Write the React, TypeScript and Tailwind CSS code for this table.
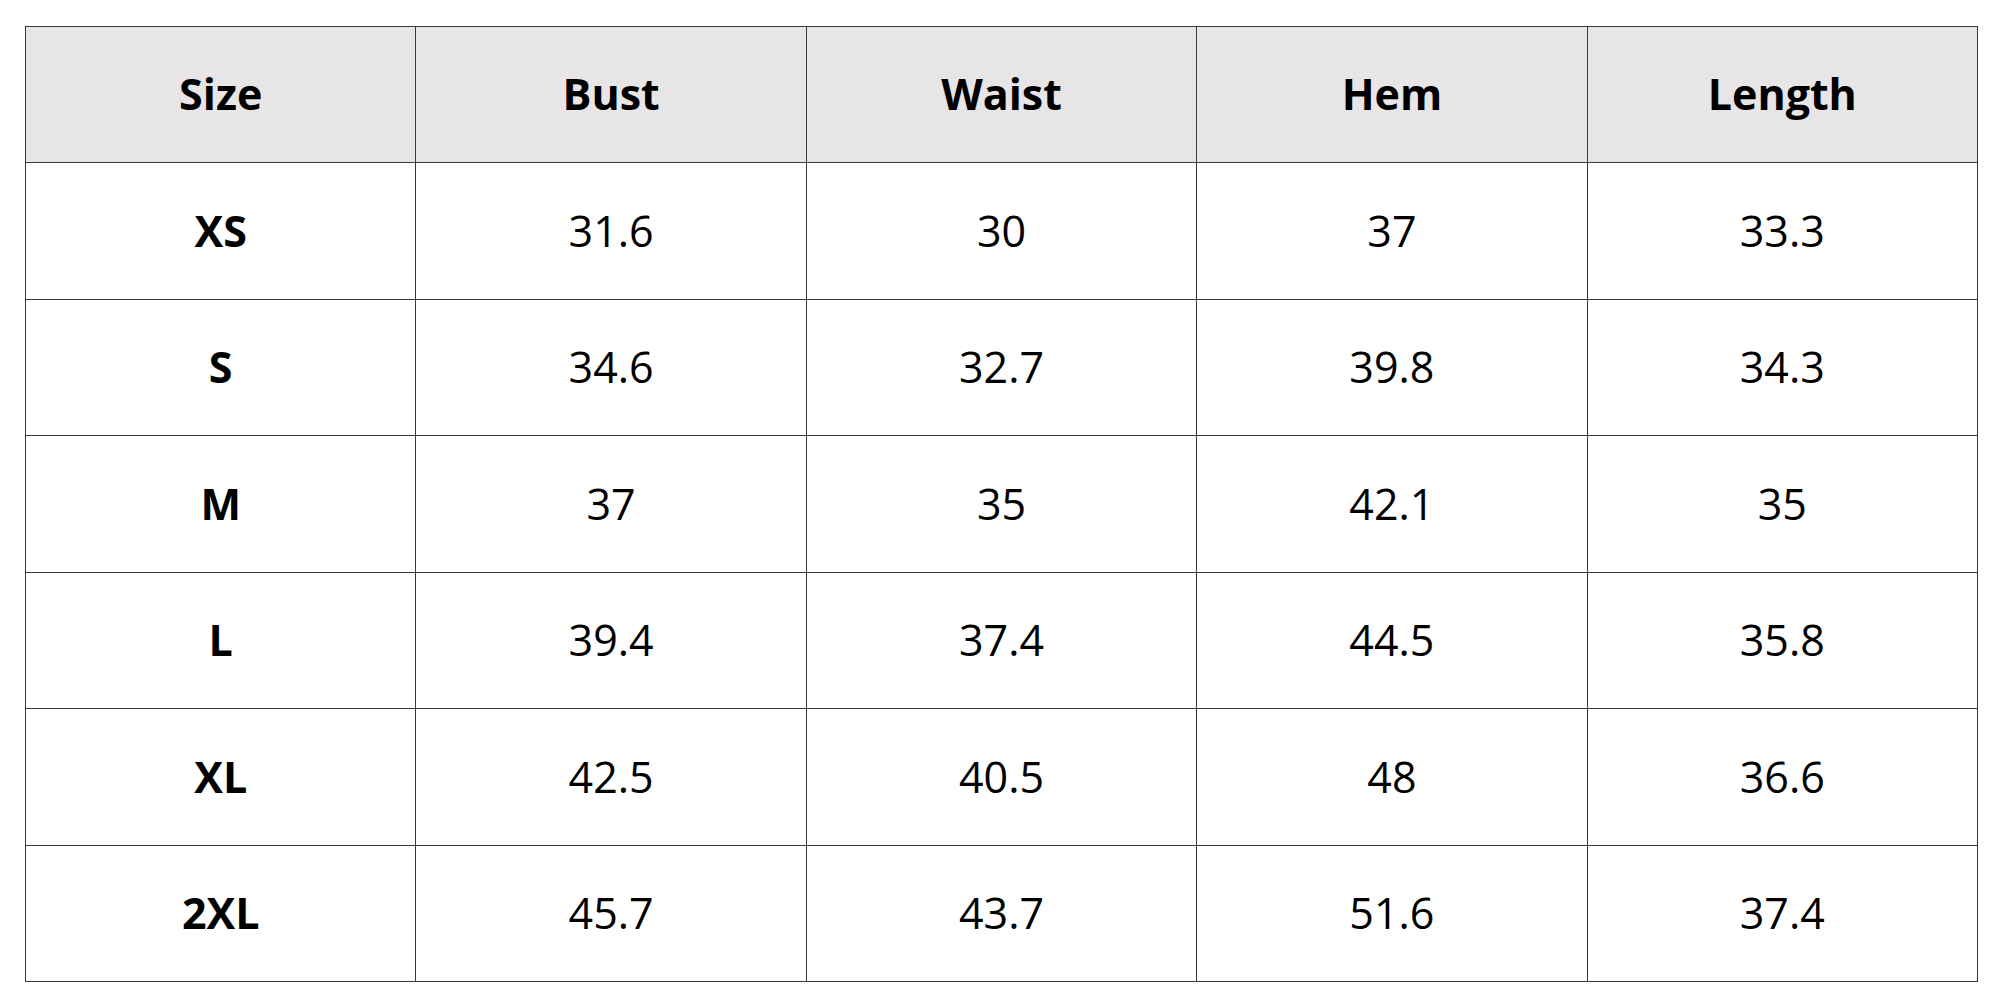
import { FC } from "react";

const headers = ["Size", "Bust", "Waist", "Hem", "Length"];

const rows: string[][] = [
    ["XS", "31.6", "30", "37", "33.3"],
    ["S", "34.6", "32.7", "39.8", "34.3"],
    ["M", "37", "35", "42.1", "35"],
    ["L", "39.4", "37.4", "44.5", "35.8"],
    ["XL", "42.5", "40.5", "48", "36.6"],
    ["2XL", "45.7", "43.7", "51.6", "37.4"],
];

const App: FC = () => {
    return (
        <div className="w-[2000px] h-[1000px] bg-white pl-[25px] pt-[26px] font-['Open_Sans',sans-serif] text-black">
            <div className="grid grid-cols-5 grid-rows-7 w-[1953px] h-[956px] border-t-[1.5px] border-l-[1.5px] border-[#3a3a3a]">
                {headers.map((h) => (
                    <div
                        key={h}
                        className="flex items-center justify-center bg-[#e7e5e6] border-r-[1.5px] border-b-[1.5px] border-[#3a3a3a] text-[43px] font-bold"
                    >
                        {h}
                    </div>
                ))}
                {rows.map((row) =>
                    row.map((cell, i) => (
                        <div
                            key={`${row[0]}-${i}`}
                            className={
                                i === 0
                                    ? "flex items-center justify-center border-r-[1.5px] border-b-[1.5px] border-[#3a3a3a] text-[43px] font-bold"
                                    : "flex items-center justify-center border-r-[1.5px] border-b-[1.5px] border-[#3a3a3a] text-[43px] font-normal"
                            }
                        >
                            {cell}
                        </div>
                    ))
                )}
            </div>
        </div>
    );
};

export default App;
